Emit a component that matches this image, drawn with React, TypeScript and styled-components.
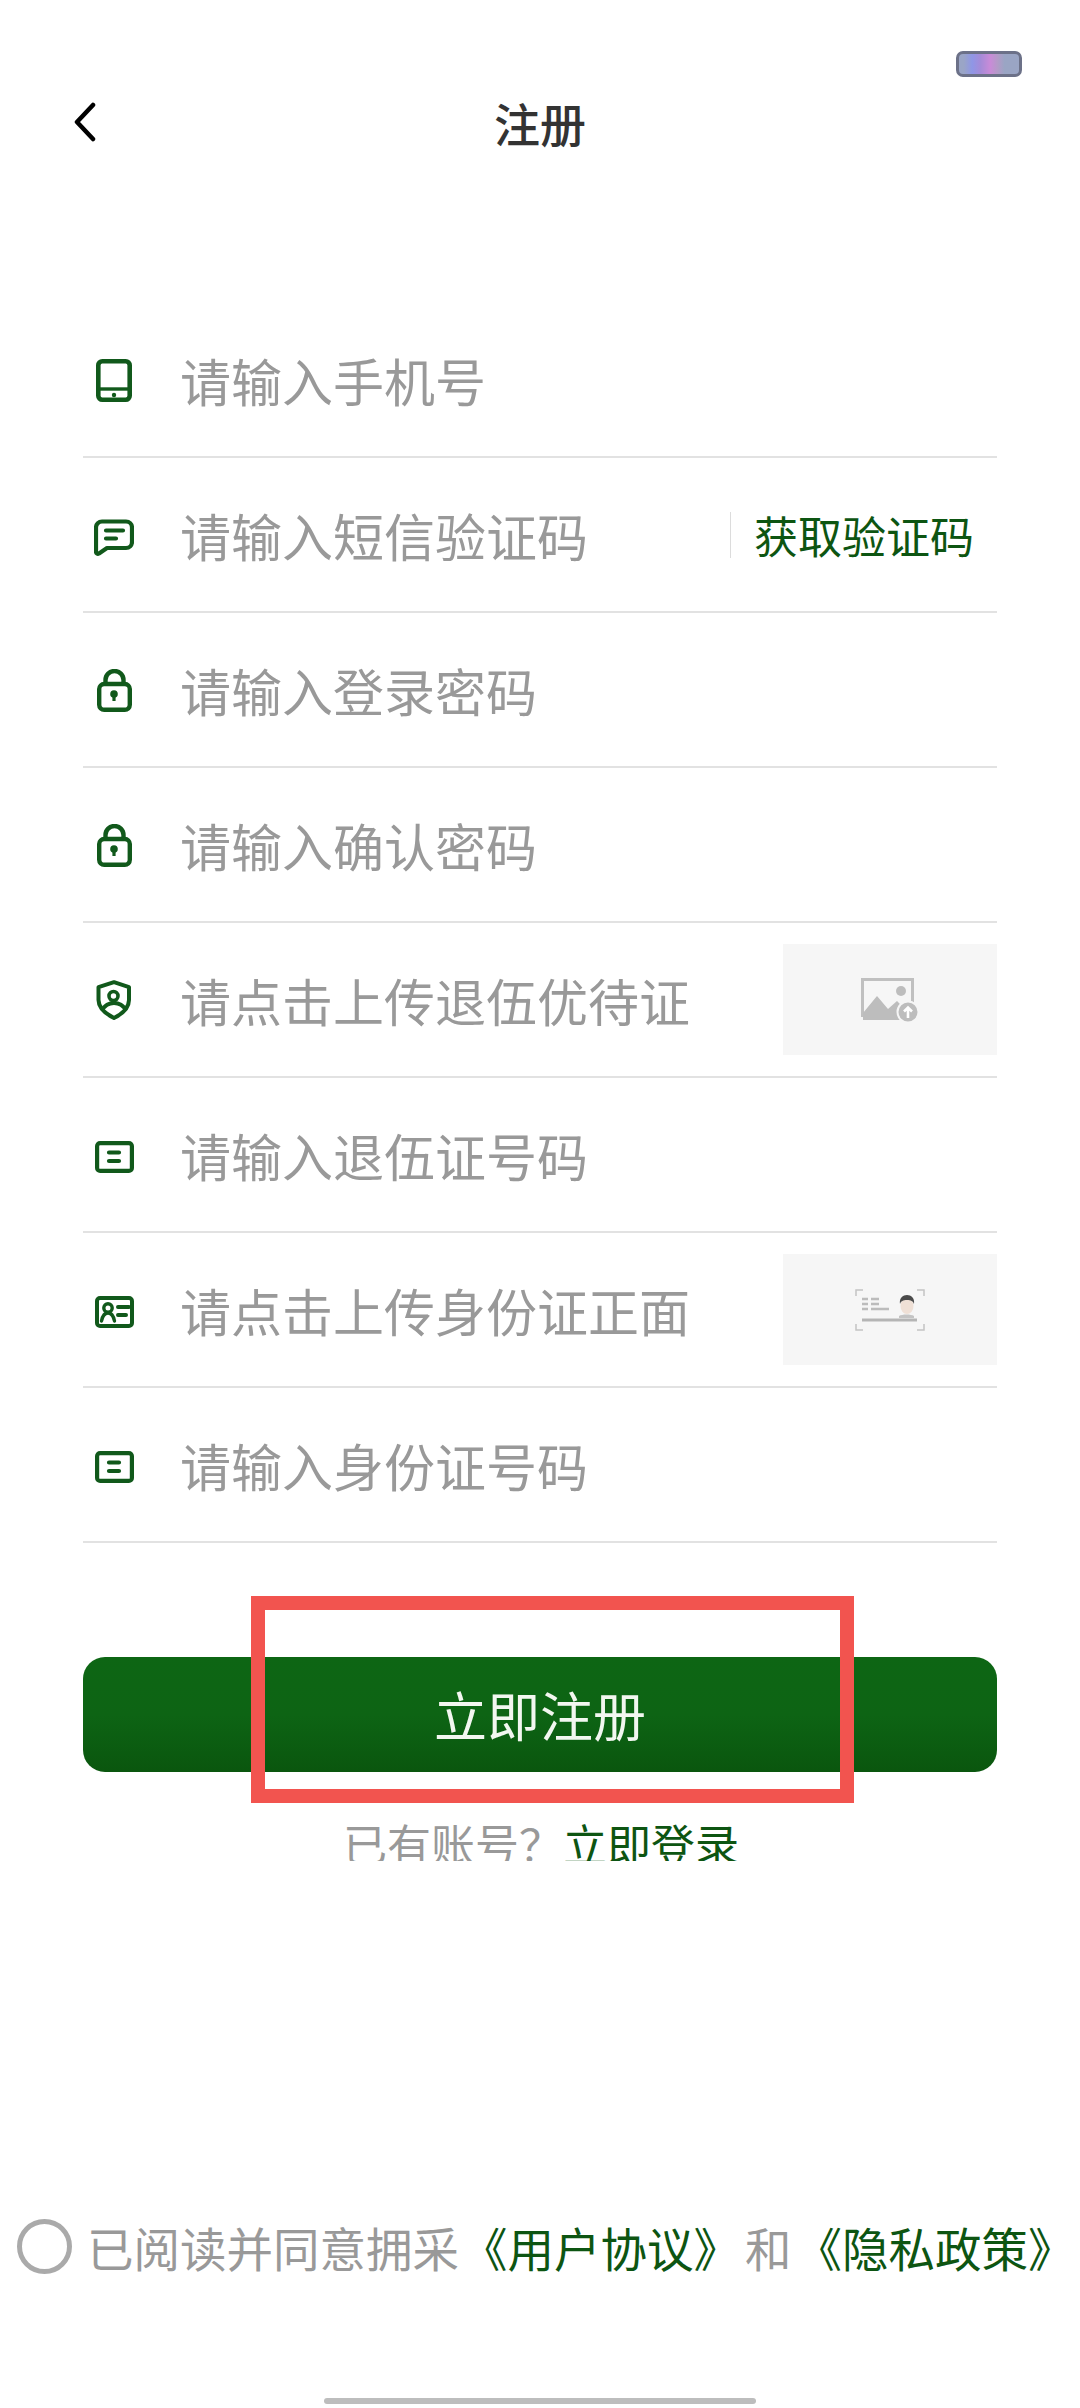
import React from 'react';
import styled, { createGlobalStyle } from 'styled-components';

const GREEN = '#11591b';
const TEXT_GREEN = '#0d5512';

const GlobalStyle = createGlobalStyle`
  html, body {
    margin: 0;
    padding: 0;
    background: #fff;
  }
  * {
    box-sizing: border-box;
  }
`;

const Page = styled.div`
  position: relative;
  display: flex;
  flex-direction: column;
  width: 1080px;
  height: 2408px;
  overflow: hidden;
  background: #fff;
  font-family: "Noto Sans CJK SC", "Noto Sans", sans-serif;
`;

const Badge = styled.div`
  position: absolute;
  top: 51px;
  right: 58px;
  width: 66px;
  height: 26px;
  border: 3px solid #6c7188;
  border-radius: 7px;
  background: linear-gradient(
    90deg,
    #9aa5c6 0%,
    #9aa5c6 8%,
    #8f96e6 22%,
    #a58bd8 36%,
    #c98bd8 52%,
    #b49ac8 64%,
    #9aa5c4 76%,
    #9aa5c4 100%
  );
`;

const Header = styled.header`
  display: grid;
  grid-template-columns: 1fr auto 1fr;
  align-items: center;
  height: 250px;
  padding: 0 72px;
`;

const BackIcon = styled.svg`
  display: block;
  width: 26px;
  height: 40px;
  margin-top: -6px;
`;

const Title = styled.h1`
  margin: 0 0 6px;
  font-size: 46px;
  font-weight: 500;
  line-height: 1;
  color: #333;
`;

const Form = styled.div`
  display: flex;
  flex-direction: column;
  width: 914px;
  margin: 53px 0 0 83px;
`;

const Row = styled.div`
  display: flex;
  align-items: center;
  height: 155px;
  border-bottom: 2px solid #e2e2e2;
`;

const IconSlot = styled.div<{ $nudge: number }>`
  display: flex;
  flex: none;
  align-items: center;
  justify-content: center;
  width: 62px;
  height: 50px;
  margin-right: 35px;
  color: ${GREEN};
  transform: translateY(${(p) => p.$nudge}px);
`;

const Placeholder = styled.span`
  flex: 1;
  font-size: 51px;
  line-height: 1;
  color: #999;
  transform: translateY(1px);
`;

const CodeButton = styled.button`
  flex: none;
  width: 267px;
  height: 46px;
  padding: 0 0 0 23px;
  border: 0;
  border-left: 1px solid #dcdcdc;
  background: none;
  font-family: inherit;
  font-size: 44px;
  line-height: 46px;
  text-align: left;
  white-space: nowrap;
  color: ${TEXT_GREEN};
`;

const UploadBox = styled.div`
  display: flex;
  flex: none;
  align-items: center;
  justify-content: center;
  width: 214px;
  height: 111px;
  background: #f6f6f6;
`;

const ButtonArea = styled.div`
  position: relative;
  width: 914px;
  margin: 114px 0 0 83px;
`;

const SubmitButton = styled.button`
  display: block;
  width: 100%;
  height: 115px;
  padding: 0;
  border: 0;
  border-radius: 22px;
  background: linear-gradient(180deg, #0d6614 0%, #0d6414 50%, #0a560e 100%);
  font-family: inherit;
  font-size: 53px;
  line-height: 1;
  color: #f2f7f0;
`;

const Annotation = styled.div`
  position: absolute;
  top: -61px;
  left: 168px;
  width: 603px;
  height: 207px;
  border: 14px solid #f2544f;
  pointer-events: none;
`;

// the reference cuts this line off at the bottom
const LoginLine = styled.div`
  width: 100%;
  height: 40px;
  margin-top: 49px;
  overflow: hidden;
  font-size: 44px;
  line-height: 44px;
  text-align: center;
  color: #999;
  transform: translateX(1px);
`;

const GreenText = styled.span`
  color: ${TEXT_GREEN};
`;

const AgreementLink = styled(GreenText)<{ $offset: number }>`
  margin-left: ${(p) => p.$offset}px;
`;

const Joiner = styled.span`
  margin: 0 4px 0 5px;
`;

const Agreement = styled.div`
  display: flex;
  align-items: center;
  gap: 15px;
  height: 55px;
  margin-top: auto;
  padding-left: 17px;
  font-size: 46.5px;
  line-height: 55px;
  white-space: nowrap;
  color: #999;
`;

const Radio = styled.span`
  flex: none;
  width: 55px;
  height: 55px;
  border: 5px solid #aaa;
  border-radius: 50%;
`;

const HomeIndicator = styled.div`
  flex: none;
  align-self: center;
  width: 432px;
  height: 6px;
  margin: 124px 0 4px;
  border-radius: 3px;
  background: #bdbdbd;
`;

const PhoneIcon = () => (
  <svg width="36" height="43" viewBox="0 0 36 43" fill="none" stroke="currentColor" strokeWidth="4.6">
    <rect x="2.300" y="2.300" width="31.400" height="38.400" rx="4" />
    <path d="M2 30h32" strokeWidth="3.400" />
    <circle cx="18" cy="36" r="2.200" fill="currentColor" stroke="none" />
  </svg>
);

const ChatIcon = () => (
  <svg width="40" height="37" viewBox="0 0 40 37" fill="none" stroke="currentColor" strokeWidth="4.2" strokeLinecap="round" strokeLinejoin="round">
    <path d="M8 2.500h24a6 6 0 0 1 6 6v14.500a6 6 0 0 1-6 6H13l-8 5.500c-1.500.8-3-.2-3-1.800V8.500a6 6 0 0 1 6-6z" />
    <path d="M12 11.500h17M12 19.500h10" />
  </svg>
);

const LockIcon = () => (
  <svg width="35" height="43" viewBox="0 0 35 43" fill="none" stroke="currentColor" strokeWidth="4.4">
    <rect x="2.200" y="15" width="30.600" height="25.800" rx="5" />
    <path d="M8.500 15v-4a9 9 0 0 1 18 0v4" />
    <circle cx="17" cy="25" r="3.800" fill="currentColor" stroke="none" />
    <path d="M17 26v6" strokeWidth="3.200" />
  </svg>
);

const ShieldIcon = () => (
  <svg width="36" height="40" viewBox="0 0 36 40" fill="none" stroke="currentColor" strokeWidth="4" strokeLinejoin="round">
    <path d="M18 2.200l15 5v12.800c0 8-7 14-15 18C10 34 2.500 28 2.500 20V7.200z" />
    <circle cx="17.500" cy="16" r="4.500" strokeWidth="3.600" />
    <path d="M6 30c3-5 7-7 12-7s9 2 12 7" />
  </svg>
);

const CardIcon = () => (
  <svg width="39" height="32" viewBox="0 0 39 32" fill="none" stroke="currentColor" strokeWidth="4.200" strokeLinecap="round">
    <rect x="2.100" y="2.100" width="34.800" height="27.800" rx="3" />
    <path d="M14 11.500h10M14 20h10" />
  </svg>
);

const IdIcon = () => (
  <svg width="39" height="32" viewBox="0 0 39 32" fill="none" stroke="currentColor" strokeWidth="4" strokeLinecap="round">
    <rect x="2" y="2" width="35" height="28" rx="3" />
    <circle cx="13" cy="12" r="4.200" strokeWidth="3.400" />
    <path d="M6.500 25c1-5 3.500-8 6.500-8s5.500 3 6.500 8" strokeWidth="3.400" />
    <path d="M23 11h11M23 19h8" />
  </svg>
);

const ImageUploadIcon = () => (
  <svg width="58" height="44" viewBox="0 0 58 44">
    <path d="M1.500 1.500h50v36h-50z" fill="none" stroke="#c0c0c0" strokeWidth="3" />
    <path d="M2 42V35L16 18l11 13 9-8 10 10v9z" fill="#bdbdbd" />
    <circle cx="40" cy="13" r="5" fill="#bdbdbd" />
    <circle cx="47" cy="34" r="10.500" fill="#bdbdbd" stroke="#f6f6f6" strokeWidth="2" />
    <path d="M47 40v-10M43 33.500l4-4 4 4" fill="none" stroke="#fff" strokeWidth="2.600" />
  </svg>
);

const IdCardIllustration = () => (
  <svg width="70" height="44" viewBox="0 0 70 44" fill="none">
    <path d="M1 8V2h7M62 2h7v6M1 36v6h7M62 42h7v-6" stroke="#c4c4c4" strokeWidth="1.500" />
    <path d="M7 11h6M16 11h8M7 16h6M16 16h8M7 21h6M16 21h18" stroke="#bcbcbc" strokeWidth="2.500" />
    <path d="M7 32h55" stroke="#b5b5b5" strokeWidth="3" />
    <path d="M44 28c3-2 12-2 15 0v2H44z" fill="#c4c4c4" />
    <ellipse cx="52" cy="18" rx="6.500" ry="8" fill="#efe0d6" />
    <path d="M45 16c-1-6 3-9 7-9s8 3 7 9c-1-3-3-4-7-4s-6 1-7 4z" fill="#4a4a4a" />
  </svg>
);

const fields = [
  { icon: <PhoneIcon />, nudge: 1, text: '请输入手机号' },
  { icon: <ChatIcon />, nudge: 3, text: '请输入短信验证码', code: true },
  { icon: <LockIcon />, nudge: 1, text: '请输入登录密码' },
  { icon: <LockIcon />, nudge: 1, text: '请输入确认密码' },
  { icon: <ShieldIcon />, nudge: 0, text: '请点击上传退伍优待证', upload: <ImageUploadIcon /> },
  { icon: <CardIcon />, nudge: 2, text: '请输入退伍证号码' },
  { icon: <IdIcon />, nudge: 2, text: '请点击上传身份证正面', upload: <IdCardIllustration /> },
  { icon: <CardIcon />, nudge: 2, text: '请输入身份证号码' },
];

export default function App() {
  return (
    <Page>
      <GlobalStyle />
      <Badge />
      <Header>
        <BackIcon viewBox="0 0 26 40" fill="none" stroke="#000" strokeWidth="4.500" strokeLinecap="round" strokeLinejoin="round">
          <path d="M21 3L5 20l16 17" />
        </BackIcon>
        <Title>注册</Title>
      </Header>
      <Form>
        {fields.map((field) => (
          <Row key={field.text}>
            <IconSlot $nudge={field.nudge}>{field.icon}</IconSlot>
            <Placeholder>{field.text}</Placeholder>
            {field.code && <CodeButton>获取验证码</CodeButton>}
            {field.upload && <UploadBox>{field.upload}</UploadBox>}
          </Row>
        ))}
      </Form>
      <ButtonArea>
        <SubmitButton>立即注册</SubmitButton>
        <Annotation />
        <LoginLine>
          已有账号？<GreenText>立即登录</GreenText>
        </LoginLine>
      </ButtonArea>
      <Agreement>
        <Radio />
        <span>
          已阅读并同意拥采
          <AgreementLink $offset={2}>《用户协议》</AgreementLink>
          <Joiner>和</Joiner>
          <AgreementLink $offset={0}>《隐私政策》</AgreementLink>
        </span>
      </Agreement>
      <HomeIndicator />
    </Page>
  );
}
